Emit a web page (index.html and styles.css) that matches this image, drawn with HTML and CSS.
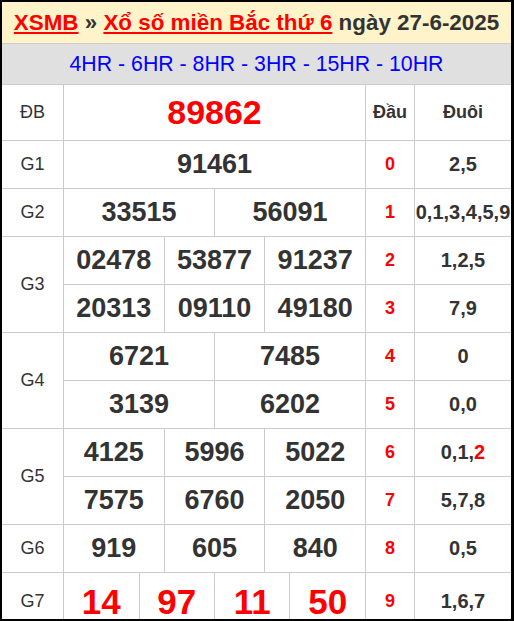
FILE: index.html
```html
<!DOCTYPE html>
<html lang="vi">
<head>
<meta charset="utf-8">
<title>XSMB thứ 6 ngày 27-6-2025</title>
<link rel="stylesheet" href="styles.css">
</head>
<body>
<div class="box">
  <div class="title">
    <a href="#" class="lnk">XSMB</a> » <a href="#" class="lnk">Xổ số miền Bắc thứ 6</a> ngày 27-6-2025
  </div>
  <div class="nav">4HR - 6HR - 8HR - 3HR - 15HR - 10HR</div>
  <div class="kq">
    <div class="cell lbl">ĐB</div>
    <div class="cell num db s12">89862</div>
    <div class="cell hd">Đầu</div>
    <div class="cell hd">Đuôi</div>

    <div class="cell lbl">G1</div>
    <div class="cell num s12">91461</div>
    <div class="cell dau">0</div>
    <div class="cell duoi">2,5</div>

    <div class="cell lbl">G2</div>
    <div class="cell num s6">33515</div>
    <div class="cell num s6">56091</div>
    <div class="cell dau">1</div>
    <div class="cell duoi">0,1,3,4,5,9</div>

    <div class="cell lbl r2">G3</div>
    <div class="cell num s4">02478</div>
    <div class="cell num s4">53877</div>
    <div class="cell num s4">91237</div>
    <div class="cell dau">2</div>
    <div class="cell duoi">1,2,5</div>
    <div class="cell num s4">20313</div>
    <div class="cell num s4">09110</div>
    <div class="cell num s4">49180</div>
    <div class="cell dau">3</div>
    <div class="cell duoi">7,9</div>

    <div class="cell lbl r2">G4</div>
    <div class="cell num s6">6721</div>
    <div class="cell num s6">7485</div>
    <div class="cell dau">4</div>
    <div class="cell duoi">0</div>
    <div class="cell num s6">3139</div>
    <div class="cell num s6">6202</div>
    <div class="cell dau">5</div>
    <div class="cell duoi">0,0</div>

    <div class="cell lbl r2">G5</div>
    <div class="cell num s4">4125</div>
    <div class="cell num s4">5996</div>
    <div class="cell num s4">5022</div>
    <div class="cell dau">6</div>
    <div class="cell duoi">0,1,<span class="red">2</span></div>
    <div class="cell num s4">7575</div>
    <div class="cell num s4">6760</div>
    <div class="cell num s4">2050</div>
    <div class="cell dau">7</div>
    <div class="cell duoi">5,7,8</div>

    <div class="cell lbl">G6</div>
    <div class="cell num s4">919</div>
    <div class="cell num s4">605</div>
    <div class="cell num s4">840</div>
    <div class="cell dau">8</div>
    <div class="cell duoi">0,5</div>

    <div class="cell lbl last">G7</div>
    <div class="cell num g7 s3 last">14</div>
    <div class="cell num g7 s3 last">97</div>
    <div class="cell num g7 s3 last">11</div>
    <div class="cell num g7 s3 last">50</div>
    <div class="cell dau last">9</div>
    <div class="cell duoi last">1,6,7</div>
  </div>
</div>
</body>
</html>
```

FILE: styles.css
```css
html, body {
  margin: 0;
  padding: 0;
  background: #000;
}
body {
  font-family: "Liberation Sans", Arial, sans-serif;
  color: #333;
}
.box {
  width: 509px;
  border-style: solid;
  border-color: #000;
  border-width: 2px 3px 2px 2px;
  background: #fff;
}
.title {
  background: #fff3c9;
  height: 41px;
  line-height: 41px;
  text-align: center;
  font-size: 22.4px;
  font-weight: bold;
  color: #333;
  white-space: nowrap;
  border-bottom: 1px solid #ccc;
}
.lnk {
  color: #f00;
  text-decoration: underline;
}
.nav {
  background: #e0e0e0;
  height: 40px;
  line-height: 40px;
  text-align: center;
  font-size: 21.3px;
  color: #00f;
  border-bottom: 1px solid #ccc;
}
.kq {
  display: grid;
  grid-template-columns: 61px repeat(12, 1fr) 48px 96px;
  grid-template-rows: 55px repeat(9, 47px) 46px;
  gap: 1px;
  background: #ccc;
}
.cell {
  background: #fff;
  display: flex;
  align-items: center;
  justify-content: center;
  white-space: nowrap;
  overflow: hidden;
  min-width: 0;
}
.cell.last {
  padding-top: 11px;
}
.s12 { grid-column: span 12; }
.s6 { grid-column: span 6; }
.s4 { grid-column: span 4; }
.s3 { grid-column: span 3; }
.r2 { grid-row: span 2; }
.lbl {
  font-size: 18px;
}
.num {
  font-size: 27px;
  font-weight: bold;
}
.db {
  color: #f00;
  font-size: 34px;
}
.g7 {
  color: #f00;
  font-size: 35px;
}
.hd {
  font-size: 18px;
  font-weight: bold;
}
.dau {
  color: #f00;
  font-size: 18px;
  font-weight: bold;
}
.duoi {
  font-size: 20px;
  font-weight: bold;
}
.red {
  color: #f00;
}
```
